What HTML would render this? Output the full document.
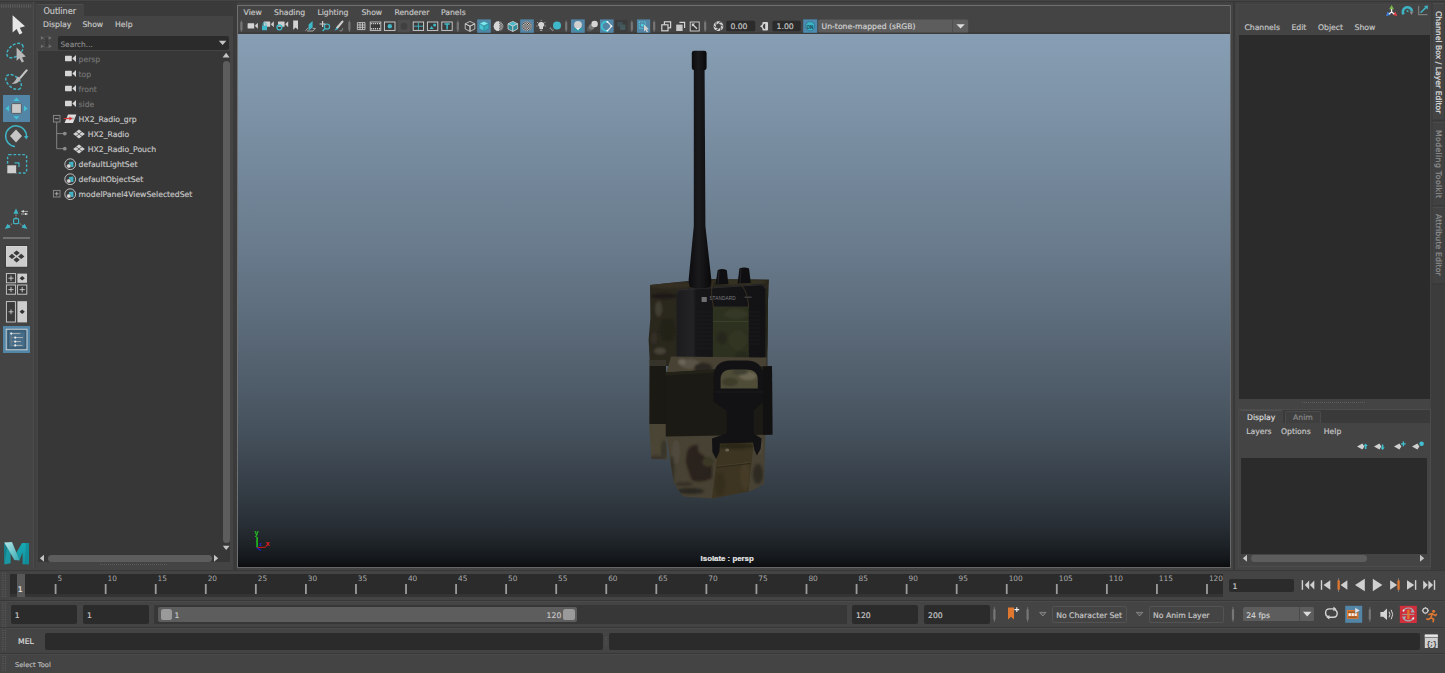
<!DOCTYPE html><html><head><meta charset="utf-8"><title>Maya</title><style>
html,body{margin:0;padding:0;}
body{width:1445px;height:673px;overflow:hidden;background:#444444;position:relative;
 font-family:"DejaVu Sans","Liberation Sans",sans-serif;font-size:7.7px;color:#c8c8c8;}
div{position:absolute;box-sizing:border-box;}
.t{white-space:nowrap;line-height:10px;height:10px;-webkit-text-stroke:0.18px currentColor;}
svg{position:absolute;overflow:visible;}
</style></head><body>
<div style="left:0px;top:0.9px;width:1445px;height:1.1px;background:#383838;"></div>
<div style="left:0px;top:2px;width:1445px;height:1.8px;background:#414141;"></div>
<svg style="left:1px;top:4px" width="30" height="4"><line x1="0" y1="2" x2="30" y2="2" stroke="#5e5e5e" stroke-width="3.4" stroke-dasharray="1 1.25"/></svg>
<div style="left:33px;top:2px;width:1px;height:566px;background:#4c4c4c;"></div>
<div style="left:34px;top:2px;width:2px;height:566px;background:#404040;"></div>
<svg style="left:0;top:0" width="34" height="200"><path d="M12.6 15.2 L12.6 32.6 L16.6 29 L19.4 34.4 L22.4 33 L19.8 27.8 L25 26.2 Z" fill="#e6e6e6"/><ellipse cx="15" cy="50.5" rx="9.3" ry="5.6" transform="rotate(-38 15 50.5)" fill="none" stroke="#3fb3c4" stroke-width="1.5" stroke-dasharray="3 1.6"/><path d="M16.6 47.6 L16.6 60.8 L19.6 58.2 L21.8 62.6 L24 61.6 L22 57.4 L25.8 56.4 Z" fill="#b8b8b8"/><ellipse cx="13.6" cy="82" rx="9.2" ry="5.6" transform="rotate(42 13.6 82)" fill="none" stroke="#3fb3c4" stroke-width="1.5" stroke-dasharray="3 1.6"/><path d="M26.6 70.4 L20.4 77.6" stroke="#c4c4c4" stroke-width="2.2" stroke-linecap="round"/><path d="M20.8 78.2 C19.5 82.5 15.5 84.5 11.6 83.6 C14.5 82.5 16 80 17.6 76.6 Z" fill="#b8b8b8"/><rect x="3" y="95" width="27" height="27" fill="#5285a6"/><rect x="11.6" y="103.6" width="9.8" height="9.8" rx="1" fill="#c9c9c9" stroke="#4a4a4a" stroke-width="0.8"/><path d="M16.5 97.6 L19.6 101 L13.4 101 Z M16.5 119.6 L19.6 116.2 L13.4 116.2 Z M5.4 108.5 L9 105.4 L9 111.6 Z M27.6 108.5 L24 105.4 L24 111.6 Z" fill="#43c3d3"/><path d="M26.4 137.4 A10.4 10.4 0 1 0 15 146.6" fill="none" stroke="#3fb3c4" stroke-width="1.5"/><path d="M24 136 L28.4 136 L26.2 139.6 Z" fill="#3fb3c4"/><path d="M16 129.6 L22 136 L16 142.4 L10 136 Z" fill="#c6c6c6"/><rect x="7.6" y="154.6" width="19" height="18.4" rx="1.5" fill="none" stroke="#3fb3c4" stroke-width="1.4" stroke-dasharray="2.6 1.8"/><path d="M14.6 162.8 L19 162.8 L19 167" fill="none" stroke="#3fb3c4" stroke-width="1.2"/><rect x="7" y="165" width="9.4" height="8.6" fill="#cfcfcf" stroke="#444" stroke-width="0.6"/></svg>
<svg style="left:0;top:200px" width="34" height="40"><path d="M16 12 L16 18 M14 22.4 L9 26 M18.4 22.4 L23 26" stroke="#9a9a9a" stroke-width="1" stroke-dasharray="1.4 1"/><path d="M16 8.6 L18.6 13.8 L13.4 13.8 Z M4.8 29 L7.6 23.8 L10.8 27.6 Z M27.4 29 L21.4 27.6 L24.6 23.8 Z" fill="#3fb3c4"/><rect x="13.6" y="18.6" width="5" height="5" rx="1" fill="none" stroke="#3fb3c4" stroke-width="1.2"/><path d="M21 11.4 H28 M21 14 H28" stroke="#bdbdbd" stroke-width="0.8"/><rect x="22.4" y="10.4" width="1.6" height="2" fill="#ddd"/><rect x="25" y="13" width="1.6" height="2" fill="#ddd"/></svg>
<div style="left:3px;top:237px;width:27px;height:2px;background:#707070;"></div>
<svg style="left:0;top:240px" width="34" height="120"><rect x="6.4" y="6.4" width="20.6" height="20" fill="#cdcdcd" stroke="#e4e4e4" stroke-width="0.8"/><rect x="5.6" y="5.6" width="22.2" height="21.6" fill="none" stroke="#3a3a3a" stroke-width="0.8"/><path d="M16.6 10.4 L19.8 13 L16.6 15.6 L13.4 13 Z M12 13.8 L15.2 16.4 L12 19 L8.8 16.4 Z M21.2 13.8 L24.4 16.4 L21.2 19 L18 16.4 Z M16.6 17.2 L19.8 19.8 L16.6 22.4 L13.4 19.8 Z" fill="#3a3a3a"/><rect x="6.4" y="33.6" width="9.2" height="9.2" fill="#3a3a3a" stroke="#cfcfcf" stroke-width="0.9"/><rect x="17.4" y="33.6" width="9.6" height="9.2" fill="#cdcdcd"/><rect x="6.4" y="45" width="9.2" height="9.2" fill="#3a3a3a" stroke="#cfcfcf" stroke-width="0.9"/><rect x="17.6" y="45" width="9.2" height="9.2" fill="#3a3a3a" stroke="#cfcfcf" stroke-width="0.9"/><path d="M8.4 38.2 H13.6 M11 35.6 V40.8 M8.4 49.6 H13.6 M11 47 V52.2 M19.6 49.6 H24.8 M22.2 47 V52.2" stroke="#cfcfcf" stroke-width="0.9"/><path d="M22.2 36 L24.8 38.2 L22.2 40.4 L19.6 38.2 Z" fill="#333"/><rect x="6.4" y="61.6" width="9" height="20.4" fill="#3a3a3a" stroke="#cfcfcf" stroke-width="0.9"/><rect x="17.4" y="61.2" width="9.6" height="21.2" fill="#cdcdcd"/><path d="M8.6 71.8 H13.4 M11 69.4 V74.2" stroke="#cfcfcf" stroke-width="0.9"/><path d="M22.2 69.6 L24.8 71.8 L22.2 74 L19.6 71.8 Z" fill="#333"/><rect x="3" y="86" width="27" height="27" fill="#5285a6"/><rect x="6.2" y="89.2" width="20.8" height="20.6" fill="#456c88" stroke="#d8d8d8" stroke-width="0.9"/><rect x="8.2" y="91" width="17" height="17" fill="none" stroke="#2e4a5e" stroke-width="0.7"/><path d="M11.4 93.6 H20.4 M15 97.6 H23 M15 101.6 H21 M15 105.4 H22.4" stroke="#b8b8b8" stroke-width="0.9"/><path d="M11.2 94 V105.4 H14 M11.2 97.6 H14 M11.2 101.6 H14" fill="none" stroke="#8a8a8a" stroke-width="0.6"/><circle cx="11.2" cy="93.6" r="1.1" fill="#eee"/><circle cx="15.2" cy="97.6" r="1.1" fill="#eee"/><circle cx="15.2" cy="101.6" r="1.1" fill="#eee"/><circle cx="15.2" cy="105.4" r="1.1" fill="#eee"/></svg>
<svg style="left:0;top:0" width="34" height="570"><defs><linearGradient id="mg1" x1="0" y1="0" x2="1" y2="1"><stop offset="0" stop-color="#b5e8ea"/><stop offset="1" stop-color="#35a9b2"/></linearGradient><linearGradient id="mg2" x1="0" y1="0" x2="0" y2="1"><stop offset="0" stop-color="#17aab3"/><stop offset="1" stop-color="#1592a0"/></linearGradient></defs><path d="M4.2 543 L10.6 553 L10.6 563.2 L4.4 564.4 Z" fill="#1a98a3"/><path d="M4.2 543 L7 547.4 L4.4 564.4 Z" fill="#13818c"/><path d="M22 543 L29 543.2 L29 564.2 L22.6 564.2 L22.6 552.4 L19.4 560.6 L16.2 553 Z" fill="url(#mg2)"/><path d="M26 543.2 L29 543.2 L29 564.2 L24.6 564.2 Z" fill="#0f8794" opacity="0.7"/><path d="M4.2 542.4 L12 542 L19.6 560.6 L14.4 560 Z" fill="url(#mg1)"/></svg>
<div style="left:36px;top:2px;width:197.4px;height:14px;background:#3a3a3a;"></div>
<div style="left:233.2px;top:2px;width:3.5px;height:568px;background:#3b3b3b;"></div>
<div style="left:36px;top:4px;width:48px;height:13px;background:#444444;border-top:1px solid #4e4e4e;border-radius:2px 2px 0 0;"></div>
<div class="t" style="left:43.4px;top:6.1px;color:#c6c6c6;font-size:8.1px;">Outliner</div>
<div class="t" style="left:43px;top:20.4px;color:#c6c6c6;font-size:7.7px;">Display</div>
<div class="t" style="left:82.4px;top:20.4px;color:#c6c6c6;font-size:7.7px;">Show</div>
<div class="t" style="left:115px;top:20.4px;color:#c6c6c6;font-size:7.7px;">Help</div>
<svg style="left:40px;top:35px" width="14" height="15"><rect x="4.6" y="2.2" width="4.4" height="10" fill="#3c3c3c" stroke="#5a5a5a" stroke-width="0.8" stroke-dasharray="1.6 1"/><path d="M0.9 1 L4.2 2.9 L0.9 4.8 Z M0.9 9.4 L4.2 11.3 L0.9 13.2 Z M8.6 1 L11.9 2.9 L8.6 4.8 Z M8.6 9.4 L11.9 11.3 L8.6 13.2 Z" fill="#6e6e6e"/></svg>
<div style="left:58px;top:36px;width:171px;height:14px;background:#2b2b2b;border-radius:2px;"></div>
<div class="t" style="left:60.4px;top:40.1px;color:#888888;font-size:7.4px;">Search...</div>
<svg style="left:218px;top:40px" width="10" height="6"><path d="M0.8 0.8 L8.4 0.8 L4.6 5 Z" fill="#c4c4c4"/></svg>
<div style="left:37.8px;top:51.2px;width:192.3px;height:511.2px;background:#373737;"></div>
<svg style="left:222px;top:52px" width="9" height="7"><path d="M0.6 5.4 L7.6 5.4 L4.1 0.8 Z" fill="#c4c4c4"/></svg>
<div style="left:223px;top:61px;width:7px;height:482px;background:#5d5d5d;border-radius:3.5px;"></div>
<svg style="left:222px;top:545px" width="9" height="7"><path d="M0.8 0.8 L7.6 0.8 L4.2 5 Z" fill="#c4c4c4"/></svg>
<svg style="left:39px;top:554px" width="6" height="9"><path d="M5 0.8 L5 7.8 L0.8 4.3 Z" fill="#c4c4c4"/></svg>
<div style="left:47.5px;top:555px;width:164px;height:7px;background:#5d5d5d;border-radius:3.5px;"></div>
<svg style="left:213px;top:554px" width="6" height="9"><path d="M1 0.8 L1 7.8 L5.2 4.3 Z" fill="#c4c4c4"/></svg>
<svg style="left:100px;top:563px" width="67" height="3"><line x1="0" y1="1.5" x2="67" y2="1.5" stroke="#5c5c5c" stroke-width="1" stroke-dasharray="1 1"/></svg>
<svg style="left:64.6px;top:54.7px" width="12" height="8"><rect x="0" y="0.8" width="6.8" height="5.4" rx="0.6" fill="#d6d6d6"/><path d="M7.3 3.5 L11 0 L11 7 Z" fill="#d6d6d6"/></svg>
<div class="t" style="left:78.6px;top:55.1px;color:#757575;font-size:7.7px;">persp</div>
<svg style="left:64.6px;top:69.69999999999999px" width="12" height="8"><rect x="0" y="0.8" width="6.8" height="5.4" rx="0.6" fill="#d6d6d6"/><path d="M7.3 3.5 L11 0 L11 7 Z" fill="#d6d6d6"/></svg>
<div class="t" style="left:78.6px;top:70.1px;color:#757575;font-size:7.7px;">top</div>
<svg style="left:64.6px;top:84.69999999999999px" width="12" height="8"><rect x="0" y="0.8" width="6.8" height="5.4" rx="0.6" fill="#d6d6d6"/><path d="M7.3 3.5 L11 0 L11 7 Z" fill="#d6d6d6"/></svg>
<div class="t" style="left:78.6px;top:85.1px;color:#757575;font-size:7.7px;">front</div>
<svg style="left:64.6px;top:99.69999999999999px" width="12" height="8"><rect x="0" y="0.8" width="6.8" height="5.4" rx="0.6" fill="#d6d6d6"/><path d="M7.3 3.5 L11 0 L11 7 Z" fill="#d6d6d6"/></svg>
<div class="t" style="left:78.6px;top:100.1px;color:#757575;font-size:7.7px;">side</div>
<svg style="left:52px;top:112px" width="30" height="42"><rect x="1.4" y="3.4" width="6.6" height="6.6" fill="none" stroke="#8c8c8c" stroke-width="0.9"/><path d="M2.8 6.7 H6.6" stroke="#b0b0b0" stroke-width="0.9"/><path d="M4.7 10 V36.7 H11 M4.7 21.6 H11" fill="none" stroke="#8c8c8c" stroke-width="0.9"/><circle cx="12.8" cy="21.6" r="1.9" fill="#8c8c8c"/><circle cx="12.8" cy="36.7" r="1.9" fill="#8c8c8c"/><path d="M16 2.4 L24.4 2.4 L21 11 L12.6 11 Z" fill="#dedede"/><path d="M13.4 7.6 L21.6 7.6 L22.6 5.6 L14.4 5.6 Z" fill="#555" opacity="0.35"/><path d="M11.6 6.5 H18" stroke="#e03030" stroke-width="1"/><path d="M17.4 4.6 L20.4 6.5 L17.4 8.4 Z" fill="#e03030"/></svg>
<div class="t" style="left:78.6px;top:115.1px;color:#c6c6c6;font-size:7.7px;">HX2_Radio_grp</div>
<svg style="left:73px;top:128.8px" width="13" height="10"><path d="M6 0.4 L8.8 2.4 L6 4.4 L3.2 2.4 Z M2.9 2.9 L5.7 4.9 L2.9 6.9 L0.1 4.9 Z M9.1 2.9 L11.9 4.9 L9.1 6.9 L6.3 4.9 Z M6 5.4 L8.8 7.4 L6 9.4 L3.2 7.4 Z" fill="#d2d2d2"/></svg>
<div class="t" style="left:87.8px;top:130.1px;color:#c6c6c6;font-size:7.7px;">HX2_Radio</div>
<svg style="left:73px;top:143.8px" width="13" height="10"><path d="M6 0.4 L8.8 2.4 L6 4.4 L3.2 2.4 Z M2.9 2.9 L5.7 4.9 L2.9 6.9 L0.1 4.9 Z M9.1 2.9 L11.9 4.9 L9.1 6.9 L6.3 4.9 Z M6 5.4 L8.8 7.4 L6 9.4 L3.2 7.4 Z" fill="#d2d2d2"/></svg>
<div class="t" style="left:87.8px;top:145.1px;color:#c6c6c6;font-size:7.7px;">HX2_Radio_Pouch</div>
<svg style="left:63.6px;top:158.2px" width="13" height="13"><circle cx="6.2" cy="6.2" r="5.4" fill="#3a3a3a" stroke="#cfcfcf" stroke-width="0.9"/><path d="M5 4 L9.4 3.4 L9.4 9 L5 9 Z" fill="#3fb3c4"/><circle cx="4.8" cy="8" r="2.1" fill="#dcdcdc" stroke="#555" stroke-width="0.5"/></svg>
<div class="t" style="left:78.6px;top:160.1px;color:#c6c6c6;font-size:7.7px;">defaultLightSet</div>
<svg style="left:63.6px;top:173.2px" width="13" height="13"><circle cx="6.2" cy="6.2" r="5.4" fill="#3a3a3a" stroke="#cfcfcf" stroke-width="0.9"/><path d="M5 4 L9.4 3.4 L9.4 9 L5 9 Z" fill="#3fb3c4"/><circle cx="4.8" cy="8" r="2.1" fill="#dcdcdc" stroke="#555" stroke-width="0.5"/></svg>
<div class="t" style="left:78.6px;top:175.1px;color:#c6c6c6;font-size:7.7px;">defaultObjectSet</div>
<svg style="left:63.6px;top:188.2px" width="13" height="13"><circle cx="6.2" cy="6.2" r="5.4" fill="#3a3a3a" stroke="#cfcfcf" stroke-width="0.9"/><path d="M5 4 L9.4 3.4 L9.4 9 L5 9 Z" fill="#3fb3c4"/><circle cx="4.8" cy="8" r="2.1" fill="#dcdcdc" stroke="#555" stroke-width="0.5"/></svg>
<div class="t" style="left:78.6px;top:190.1px;color:#c6c6c6;font-size:7.7px;">modelPanel4ViewSelectedSet</div>
<svg style="left:52px;top:189px" width="10" height="10"><rect x="1.4" y="1.4" width="6.6" height="6.6" fill="none" stroke="#8c8c8c" stroke-width="0.9"/><path d="M2.8 4.7 H6.6 M4.7 2.8 V6.6" stroke="#b0b0b0" stroke-width="0.9"/></svg>
<div style="left:236.8px;top:4.6px;width:994.5px;height:1px;background:#707070;"></div>
<div style="left:236.8px;top:4.6px;width:1px;height:563px;background:#707070;"></div>
<div style="left:1230.3px;top:4.6px;width:1px;height:563px;background:#666666;"></div>
<div style="left:236.8px;top:566.6px;width:994.5px;height:1px;background:#666666;"></div>
<div style="left:1233.4px;top:2px;width:1.8px;height:568px;background:#393939;"></div>
<div class="t" style="left:243.6px;top:8.2px;color:#c6c6c6;font-size:7.7px;">View</div>
<div class="t" style="left:274px;top:8.2px;color:#c6c6c6;font-size:7.7px;">Shading</div>
<div class="t" style="left:317.4px;top:8.2px;color:#c6c6c6;font-size:7.7px;">Lighting</div>
<div class="t" style="left:361.4px;top:8.2px;color:#c6c6c6;font-size:7.7px;">Show</div>
<div class="t" style="left:394.4px;top:8.2px;color:#c6c6c6;font-size:7.7px;">Renderer</div>
<div class="t" style="left:441px;top:8.2px;color:#c6c6c6;font-size:7.7px;">Panels</div>
<div style="left:238px;top:32px;width:992px;height:2px;background:#3c3c3c;"></div>
<div style="left:237.8px;top:34px;width:992.5px;height:532.6px;background:linear-gradient(to bottom,rgb(135,158,180) 0.0%,rgb(132,154,175) 5.0%,rgb(128,150,171) 10.0%,rgb(125,146,166) 15.0%,rgb(121,141,161) 20.0%,rgb(117,137,156) 25.0%,rgb(113,132,151) 30.0%,rgb(109,128,145) 35.0%,rgb(105,123,140) 40.0%,rgb(100,117,134) 45.0%,rgb(96,112,128) 50.0%,rgb(91,106,121) 55.0%,rgb(86,100,114) 60.0%,rgb(80,94,107) 65.0%,rgb(75,87,99) 70.0%,rgb(68,80,91) 75.0%,rgb(61,71,81) 80.0%,rgb(53,62,71) 85.0%,rgb(44,51,58) 90.0%,rgb(38,45,51) 92.5%,rgb(32,37,42) 95.0%,rgb(27,32,36) 96.5%,rgb(22,25,29) 98.0%,rgb(17,20,23) 99.0%,rgb(11,12,14) 100.0%);"></div>
<svg style="left:0;top:0" width="1240" height="36"><path d="M241.4 20.4 V32" stroke="#6c6c6c" stroke-width="1"/><path d="M241.4 22.8 V29.6" stroke="#767676" stroke-width="2.2" stroke-linecap="round"/><rect x="247.6" y="23.2" width="6.6" height="5.2" rx="0.5" fill="#d4d4d4"/><path d="M254.79999999999998 25.8 L257.8 22.8 L257.8 28.799999999999997 Z" fill="#d4d4d4"/><rect x="263.6" y="21.6" width="6.6" height="5.2" rx="0.5" fill="#cfcfcf"/><path d="M270.8 24.200000000000003 L273.8 21.200000000000003 L273.8 27.200000000000003 Z" fill="#cfcfcf"/><rect x="262" y="25.6" width="5" height="4.6" fill="#3fb9c9"/><path d="M263 25.6 V24.2 A1.5 1.5 0 0 1 266 24.2 V25.6" fill="none" stroke="#3fb9c9" stroke-width="0.9"/><rect x="278" y="21.6" width="6.6" height="5.2" rx="0.5" fill="#cfcfcf"/><path d="M285.2 24.200000000000003 L288.2 21.200000000000003 L288.2 27.200000000000003 Z" fill="#cfcfcf"/><circle cx="279.4" cy="27.4" r="2.4" fill="none" stroke="#3fb9c9" stroke-width="1.3"/><path d="M293.2 20.6 H298 V29.8 L295.6 27.6 L293.2 29.8 Z" fill="#d4d4d4"/><path d="M308.6 24.4 L312.6 21 L312.6 27.6 L308.6 30.6 Z" fill="#3fb9c9"/><path d="M305.4 30.6 L308.4 27.8 M307 31 H313 L315.4 28.4 H312.6" fill="none" stroke="#b0b0b0" stroke-width="0.9"/><circle cx="327" cy="26.6" r="2.6" fill="none" stroke="#3fb9c9" stroke-width="1.2"/><path d="M325 28.6 L322.6 31" stroke="#3fb9c9" stroke-width="1.4"/><path d="M319.6 24 H325.4 M322.6 21 V27" stroke="#cfcfcf" stroke-width="1.2"/><path d="M342.4 21.6 L337 28" stroke="#cfcfcf" stroke-width="2.2" stroke-linecap="round"/><path d="M336.6 27.4 L334.4 30.8 L338 29" fill="#3fb9c9"/><path d="M339.6 30.6 C341.6 31.4 343.4 30 342.2 28.2" fill="none" stroke="#a8a8a8" stroke-width="0.8"/><path d="M349.4 20.4 V32" stroke="#6c6c6c" stroke-width="1"/><path d="M349.4 22.8 V29.6" stroke="#767676" stroke-width="2.2" stroke-linecap="round"/><path d="M357.4 22.6 H365 V29.6 H357.4 Z M357.4 25 H365 M357.4 27.3 H365 M360 22.6 V29.6 M362.5 22.6 V29.6" fill="none" stroke="#d4d4d4" stroke-width="0.8"/><rect x="370.2" y="22" width="10.6" height="8.4" fill="#3a3a3a" stroke="#d4d4d4" stroke-width="0.8"/><path d="M370.6 23.6 H380.4 M370.6 28.8 H380.4" stroke="#d4d4d4" stroke-width="1.4" stroke-dasharray="1.2 0.9"/><rect x="384.4" y="22" width="10.6" height="8.4" fill="#3a3a3a" stroke="#d4d4d4" stroke-width="0.9"/><circle cx="389.8" cy="26.2" r="2.2" fill="#3fb9c9"/><rect x="397.8" y="19.8" width="12.6" height="12.6" fill="#4d4d4d"/><circle cx="404" cy="26.2" r="3.5" fill="#404040"/><rect x="413.2" y="22" width="10.4" height="8.4" fill="#3a3a3a" stroke="#d4d4d4" stroke-width="0.9"/><path d="M414 26.2 H423 M418.4 22.6 V30" stroke="#3fb9c9" stroke-width="0.9"/><rect x="427.4" y="22" width="10.4" height="8.4" fill="#3a3a3a" stroke="#d4d4d4" stroke-width="0.9"/><circle cx="434.6" cy="25" r="1.5" fill="#3fb9c9"/><path d="M429.6 29 L431.6 26 L433.6 29 Z" fill="#3fb9c9"/><rect x="441.8" y="22" width="10.4" height="8.4" fill="#3a3a3a" stroke="#d4d4d4" stroke-width="0.9"/><path d="M444.4 24 H449.8 M447.1 24 V29.4" stroke="#3fb9c9" stroke-width="1.5"/><path d="M457.8 20.4 V32" stroke="#6c6c6c" stroke-width="1"/><path d="M457.8 22.8 V29.6" stroke="#767676" stroke-width="2.2" stroke-linecap="round"/><path d="M470 21.4 L474.8 23.799999999999997 L470 26.2 L465.2 23.799999999999997 Z" fill="none" stroke="#d4d4d4" stroke-width="0.8" stroke-linejoin="round"/><path d="M465.2 23.799999999999997 L470 26.2 L470 31.4 L465.2 29.0 Z" fill="none" stroke="#d4d4d4" stroke-width="0.8" stroke-linejoin="round"/><path d="M474.8 23.799999999999997 L470 26.2 L470 31.4 L474.8 29.0 Z" fill="none" stroke="#d4d4d4" stroke-width="0.8" stroke-linejoin="round"/><rect x="477.2" y="19.4" width="13.6" height="13.4" fill="#5285a6"/><path d="M484 21.2 L488.8 23.599999999999998 L484 26.0 L479.2 23.599999999999998 Z" fill="#7fe6ee" stroke="#2d7f8c" stroke-width="0.5" stroke-linejoin="round"/><path d="M479.2 23.599999999999998 L484 26.0 L484 31.2 L479.2 28.8 Z" fill="#4cc4d2" stroke="#2d7f8c" stroke-width="0.5" stroke-linejoin="round"/><path d="M488.8 23.599999999999998 L484 26.0 L484 31.2 L488.8 28.8 Z" fill="#36aebd" stroke="#2d7f8c" stroke-width="0.5" stroke-linejoin="round"/><defs><pattern id="chk" width="2.4" height="2.4" patternUnits="userSpaceOnUse"><rect width="2.4" height="2.4" fill="#2a2a2a"/><rect x="0" y="0" width="1.2" height="1.2" fill="#e4e4e4"/><rect x="1.2" y="1.2" width="1.2" height="1.2" fill="#e4e4e4"/></pattern></defs><circle cx="498.6" cy="26.2" r="4.9" fill="url(#chk)"/><path d="M498.6 21.3 A4.9 4.9 0 0 0 498.6 31.1 A0.8 4.9 0 0 0 498.6 21.3 Z" fill="#d6d6d6"/><path d="M512.8 21.4 L517.5999999999999 23.799999999999997 L512.8 26.2 L507.99999999999994 23.799999999999997 Z" fill="#49bccb" stroke="#d4d4d4" stroke-width="0.8" stroke-linejoin="round"/><path d="M507.99999999999994 23.799999999999997 L512.8 26.2 L512.8 31.4 L507.99999999999994 29.0 Z" fill="#2e8e9b" stroke="#d4d4d4" stroke-width="0.8" stroke-linejoin="round"/><path d="M517.5999999999999 23.799999999999997 L512.8 26.2 L512.8 31.4 L517.5999999999999 29.0 Z" fill="#2e8e9b" stroke="#d4d4d4" stroke-width="0.8" stroke-linejoin="round"/><rect x="520.2" y="19.4" width="13.6" height="13.4" fill="#5285a6"/><circle cx="527" cy="26.2" r="5.1" fill="url(#chk)"/><path d="M541.2 22 A2.7 2.7 0 0 1 543 27 V29 H539.4 V27 A2.7 2.7 0 0 1 541.2 22 Z" fill="#d4d4d4"/><rect x="540.2" y="29.6" width="2" height="1.4" fill="#aaa"/><path d="M541.2 19.8 V21 M537 22 L538 23 M545.4 22 L544.4 23 M536.4 26 H537.6 M546 26 H544.8" stroke="#bdbdbd" stroke-width="0.8"/><circle cx="557" cy="25.6" r="4" fill="#3fb9c9"/><path d="M550 28 L553.4 30.6" stroke="#9a9a9a" stroke-width="2" stroke-dasharray="0.9 0.7"/><path d="M566.2 20.4 V32" stroke="#6c6c6c" stroke-width="1"/><path d="M566.2 22.8 V29.6" stroke="#767676" stroke-width="2.2" stroke-linecap="round"/><rect x="571" y="19.4" width="13.8" height="13.4" fill="#5285a6"/><path d="M572.6 29.2 L578 26.8 L583.4 29.2 L578 31.8 Z" fill="#2f9aa8"/><circle cx="578" cy="24.8" r="3.9" fill="#d0d0d0"/><path d="M576 28 L578 30.4 L580 28 Z" fill="#eee"/><circle cx="589.4" cy="29" r="2.6" fill="#5a5a5a"/><circle cx="591.6" cy="26.8" r="2.9" fill="#7a7a7a"/><circle cx="594.6" cy="24" r="3.2" fill="#d6d6d6"/><rect x="600" y="19.4" width="13.6" height="13.4" fill="#5285a6"/><path d="M607.6 21.8 A4.6 4.6 0 1 0 607.6 30.6" fill="none" stroke="#3fc4d4" stroke-width="1.8"/><path d="M607.4 21.6 L611.6 26.2 L607.4 30.8" fill="none" stroke="#e6e6e6" stroke-width="1.2"/><circle cx="607.4" cy="21.8" r="0.9" fill="#fff"/><circle cx="611.4" cy="26.2" r="0.9" fill="#fff"/><circle cx="607.4" cy="30.6" r="0.9" fill="#fff"/><rect x="615" y="19.8" width="12.6" height="12.6" fill="#3c3c3c"/><rect x="617.4" y="22" width="5" height="4.6" fill="#3f5255"/><rect x="620" y="24.6" width="5.4" height="5.4" fill="#44595d"/><path d="M631.8 20.4 V32" stroke="#6c6c6c" stroke-width="1"/><path d="M631.8 22.8 V29.6" stroke="#767676" stroke-width="2.2" stroke-linecap="round"/><rect x="637" y="19.4" width="13.2" height="13.4" fill="#5285a6"/><rect x="639.2" y="21.8" width="6.2" height="6.6" fill="none" stroke="#4fd0de" stroke-width="1.1" stroke-dasharray="1.2 1"/><rect x="641" y="23.8" width="2.6" height="2.6" fill="#4fd0de"/><path d="M644 24.6 V31.4 L645.6 30 L646.8 32.4 L648 31.8 L646.9 29.6 L649 29.2 Z" fill="#d0d0d0"/><path d="M654.2 20.4 V32" stroke="#6c6c6c" stroke-width="1"/><path d="M654.2 22.8 V29.6" stroke="#767676" stroke-width="2.2" stroke-linecap="round"/><rect x="664.4" y="21.8" width="6.2" height="6" fill="none" stroke="#d4d4d4" stroke-width="1.2"/><rect x="661.8" y="24.8" width="6.2" height="6" fill="#444" stroke="#d4d4d4" stroke-width="1.2"/><path d="M679.4 22.4 H684.6 V28" fill="none" stroke="#d4d4d4" stroke-width="1.2"/><rect x="676.2" y="24.6" width="6.4" height="6.4" fill="#c8c8c8"/><rect x="690.2" y="22" width="9" height="9" fill="#3a3a3a" stroke="#d4d4d4" stroke-width="0.9"/><path d="M692.4 24.2 L697 28.8" stroke="#d4d4d4" stroke-width="1.3"/><path d="M691.8 23.6 H695 L691.8 26.8 Z" fill="#d4d4d4"/><path d="M705.2 20.4 V32" stroke="#6c6c6c" stroke-width="1"/><path d="M705.2 22.8 V29.6" stroke="#767676" stroke-width="2.2" stroke-linecap="round"/><circle cx="718.4" cy="26.2" r="4.9" fill="#d4d4d4"/><path d="M718.4 23.4 L720.9 24.8 L720.9 27.6 L718.4 29 L715.9 27.6 L715.9 24.8 Z" fill="#444"/><path d="M718.4 23.4 L721.6 21.6 M720.9 24.8 L723.4 26.6 M720.9 27.6 L720.6 31 M718.4 29 L715.2 30.8 M715.9 27.6 L713.4 25.8 M715.9 24.8 L716.2 21.4" stroke="#444" stroke-width="0.9"/><rect x="726.2" y="20.8" width="29" height="10.4" rx="1.5" fill="#2b2b2b"/><rect x="762.4" y="22" width="5.6" height="8.6" rx="1" fill="#d4d4d4"/><path d="M760 26.2 L763.4 23.6 V28.8 Z" fill="#d4d4d4"/><path d="M765.2 23.4 A3 3 0 0 0 765.2 29.2 Z" fill="#3a3a3a"/><rect x="772.4" y="20.8" width="28.4" height="10.4" rx="1.5" fill="#2b2b2b"/><rect x="803.2" y="19.4" width="14" height="13.4" fill="#4d8ab2"/><circle cx="810.2" cy="26.2" r="4.6" fill="#3db5c6" stroke="#2a6e80" stroke-width="0.7"/><rect x="818.2" y="19.6" width="150" height="13" rx="1.5" fill="#5d5d5d"/><path d="M952.6 19.6 V32.6" stroke="#4a4a4a" stroke-width="0.8"/><path d="M956.4 24.2 H964.8 L960.6 28.6 Z" fill="#dcdcdc"/></svg>
<div class="t" style="left:730.4px;top:22px;color:#c6c6c6;font-size:7.7px;">0.00</div>
<div class="t" style="left:776.6px;top:22px;color:#c6c6c6;font-size:7.7px;">1.00</div>
<div class="t" style="left:806.4px;top:23.4px;color:#1d4f63;font-size:4.6px;font-weight:bold;font-family:'Liberation Sans',sans-serif;">ON</div>
<div class="t" style="left:821.6px;top:22.2px;color:#d2d2d2;font-size:7.7px;">Un-tone-mapped (sRGB)</div>
<svg style="left:0;top:0" width="1240" height="570"><defs><filter id="b1" x="-20%" y="-20%" width="140%" height="140%"><feGaussianBlur stdDeviation="1.1"/></filter><filter id="b2" x="-20%" y="-20%" width="140%" height="140%"><feGaussianBlur stdDeviation="0.5"/></filter><clipPath id="cBack"><path d="M650 285 L688 281 L712 279 L769 279.6 L768 300 L767.4 366 L650 366 L648.6 340 L650.4 318 Z"/></clipPath><clipPath id="cSide"><path d="M649.6 360 L666 360 L666 438 L667.6 459.6 L651.4 459 L649.4 430 Z"/></clipPath><clipPath id="cFront"><path d="M671 356.6 L766.6 357.4 L765.4 434 L764 484 L752 490.6 L747 491.6 L712 498.4 L683 496.4 L674 483.4 L666.4 438 L666.4 372 Z"/></clipPath><clipPath id="cVel"><rect x="712.8" y="306.6" width="36" height="56"/></clipPath><clipPath id="cStrapV"><path d="M718.4 440 L754 440 L748.4 491.6 L712 498.4 L716.4 462 Z"/></clipPath><linearGradient id="gAnt" x1="0" x2="1" y1="0" y2="0"><stop offset="0" stop-color="#0c0c0e"/><stop offset="0.45" stop-color="#1a1a1d"/><stop offset="1" stop-color="#09090a"/></linearGradient><linearGradient id="gBody" x1="0" x2="1" y1="0" y2="0"><stop offset="0" stop-color="#1c1c1e"/><stop offset="0.18" stop-color="#232326"/><stop offset="0.22" stop-color="#161618"/><stop offset="1" stop-color="#121214"/></linearGradient></defs><g clip-path="url(#cBack)"><rect x="640" y="270" width="140" height="100" fill="#2a271d"/><g filter="url(#b1)"><ellipse cx="670" cy="285" rx="22" ry="3.4" fill="#342f22"/><ellipse cx="664" cy="296" rx="13" ry="2.6" fill="#1f1916"/><ellipse cx="658.6" cy="309" rx="3.6" ry="8" fill="#413d32"/><ellipse cx="668" cy="330" rx="8" ry="11" fill="#212118"/><ellipse cx="660" cy="351" rx="6" ry="3.6" fill="#474238"/><ellipse cx="654" cy="338" rx="3" ry="6" fill="#342f26"/><ellipse cx="740" cy="282" rx="26" ry="3" fill="#353124"/><ellipse cx="767.4" cy="320" rx="2.4" ry="30" fill="#222019"/></g></g><g clip-path="url(#cSide)"><rect x="645" y="355" width="30" height="110" fill="#4a4534"/><rect x="645" y="355" width="30" height="11" fill="#36332a"/><rect x="645" y="366" width="22" height="58" fill="#1a1914"/><g filter="url(#b1)"><ellipse cx="664" cy="450" rx="3" ry="10" fill="#38342a"/><ellipse cx="656" cy="458" rx="8" ry="2.4" fill="#3a362b"/></g></g><path d="M676.6 358 L676.6 294 Q676.8 289.6 681 289.2 L760.8 284.2 Q765.2 284.2 765.4 288.6 L765.4 358 Z" fill="url(#gBody)"/><path d="M677.2 293 Q677.6 290 681 289.8 L760.8 284.8 Q764.6 284.8 764.8 288.6" fill="none" stroke="#2c2c30" stroke-width="1"/><path d="M694 300 V356" stroke="#232326" stroke-width="0.8"/><path d="M696 312 H712 M696 316 H712 M696 320 H712 M696 324 H712 M696 328 H712 M696 332 H712 M696 336 H712 M696 340 H712 M696 344 H712 M696 348 H712 M749 312 H760 M749 316 H760 M749 320 H760 M749 324 H760 M749 328 H760 M749 332 H760 M749 336 H760 M749 340 H760 M749 344 H760" stroke="#1b1b1e" stroke-width="1.2"/><rect x="701.6" y="297" width="5.2" height="5" fill="#6f6f72"/><text x="709.4" y="300.4" font-size="4.7" fill="#7e7e82" font-family="Liberation Sans, sans-serif" letter-spacing="0.1">STANDARD</text><rect x="744.6" y="296.6" width="7" height="1.2" fill="#4a4a4e"/><g clip-path="url(#cVel)"><rect x="712" y="306" width="38" height="58" fill="#2d3120"/><g filter="url(#b1)"><ellipse cx="736" cy="314" rx="12" ry="5" fill="#353926"/><ellipse cx="722" cy="338" rx="5" ry="6" fill="#27251d"/><ellipse cx="738" cy="340" rx="9" ry="10" fill="#323623"/><ellipse cx="742" cy="356" rx="7" ry="5" fill="#282b1a"/></g><path d="M713 321.6 H748.6" stroke="#40442d" stroke-width="0.9"/></g><path d="M713.6 279.6 C710 290 712 298 713.4 307" fill="none" stroke="#3a3020" stroke-width="1"/><path d="M736 280 C744 286 748 294 748.6 307" fill="none" stroke="#3a3020" stroke-width="1"/><g clip-path="url(#cFront)"><rect x="660" y="350" width="115" height="150" fill="#474233"/><g filter="url(#b1)"><ellipse cx="690" cy="364" rx="10" ry="5" fill="#585346"/><ellipse cx="682" cy="362" rx="4" ry="3" fill="#6a6456"/><ellipse cx="703" cy="368" rx="9" ry="5" fill="#2b2520"/><ellipse cx="742" cy="378" rx="16" ry="7" fill="#474735"/><ellipse cx="752" cy="372" rx="7" ry="4" fill="#5f5a50"/><ellipse cx="728" cy="386" rx="8" ry="4" fill="#343425"/><path d="M687 452 Q690 444 698 445 Q696 452 702 455 Q708 458 712 466 L712 478 Q700 484 692 480 Q688 470 686 462 Z" fill="#29201c"/><ellipse cx="708" cy="462" rx="6" ry="5" fill="#3b3727"/><ellipse cx="676" cy="452" rx="4" ry="12" fill="#504a3c"/><ellipse cx="690" cy="491" rx="14" ry="3" fill="#2c2820"/><ellipse cx="684" cy="484" rx="9" ry="2" fill="#343027"/><ellipse cx="759" cy="446" rx="4" ry="9" fill="#504a3c"/><ellipse cx="758" cy="474" rx="5" ry="10" fill="#2f2922"/><ellipse cx="672" cy="470" rx="2.4" ry="14" fill="#343027"/></g></g><path d="M665.6 372.4 L772 366 L772.4 434.6 L665.8 436.4 Z" fill="#1c1a14"/><path d="M665.6 372.4 L772 366 L772 369 L665.6 375.4 Z" fill="#232219"/><path d="M763 366.8 L772 366 L772.4 434.6 L763 434.8 L763 366.8 Z" fill="#111111"/><g clip-path="url(#cStrapV)"><rect x="708" y="438" width="50" height="64" fill="#3d3522"/><g filter="url(#b1)"><ellipse cx="736" cy="446" rx="18" ry="3" fill="#2a2519"/><ellipse cx="745" cy="476" rx="5" ry="14" fill="#443b26"/><ellipse cx="720" cy="484" rx="5" ry="12" fill="#342d1d"/></g><path d="M716.6 466.4 L751 462.4" stroke="#4a412c" stroke-width="0.9"/><path d="M716.4 467.4 L751 463.4" stroke="#2a2418" stroke-width="0.8"/><ellipse cx="727.2" cy="450" rx="2" ry="1.5" fill="#6a6456"/></g><g><rect x="719.6" y="368.4" width="39" height="21" fill="#4f4c38"/><g filter="url(#b1)"><ellipse cx="748" cy="376" rx="9" ry="4" fill="#6a6551"/><ellipse cx="730" cy="382" rx="8" ry="4" fill="#3d3c2b"/><ellipse cx="740" cy="372" rx="8" ry="3" fill="#414130"/></g></g><path fill-rule="evenodd" fill="#121214" d="M713.4 401.6 L713.6 378 C713.8 365 720 360.4 731 360.4 L746 360.4 C757 360.4 763.2 365 763.4 378 L763.6 401.6 L753.6 410.8 L753.6 433.6 L761.6 438.6 L760.6 449 L757 455.4 L754.4 450 L753 442.4 L719.8 443.6 L719.4 452 L716 459 L712.4 452 L712 438.4 L726.6 433.6 L726.6 410.8 Z M720.6 388.4 L757.8 388.4 L757.8 379 C757.6 372 753 369.4 746 369.4 L732 369.4 C725 369.4 720.8 372 720.6 379 Z"/><path d="M713.6 392 H763.4" stroke="#1e1e21" stroke-width="0.8"/><path d="M693.8 69 L693.8 226 L688.6 280 L689.6 287 Q700 290 710.4 287 L711.4 280 L705.4 226 L704.6 69 Z" fill="url(#gAnt)"/><rect x="691.8" y="50.8" width="14.8" height="19.4" rx="2.4" fill="url(#gAnt)"/><path d="M717.6 270.2 Q722.2 267.8 726.8 270.2 L728.4 284 L715.6 284.6 Z" fill="#0f0f11"/><path d="M719 270.6 L718 284" stroke="#2a2a2e" stroke-width="0.8"/><path d="M739.4 268.6 Q744.2 266.2 749 268.6 L750.8 283 L737.6 283.6 Z" fill="#0f0f11"/><path d="M741 269 L740 283" stroke="#2a2a2e" stroke-width="0.8"/></svg>
<svg style="left:250px;top:528px" width="24" height="26"><path d="M7.1 9 V19.6" stroke="#1fae1f" stroke-width="1.8"/><path d="M7 19.6 L15.6 19.2 L16.6 17.6" fill="none" stroke="#d41616" stroke-width="1"/><path d="M7 19.6 L10.8 22.6" stroke="#2020e0" stroke-width="1.2"/><text x="4.6" y="6.6" font-size="7.4" font-weight="bold" fill="#22c822" font-family="Liberation Sans, sans-serif">y</text><text x="15.6" y="17.8" font-size="7.4" font-weight="bold" fill="#e61a1a" font-family="Liberation Sans, sans-serif">x</text><text x="9.4" y="18.4" font-size="4.6" font-weight="bold" fill="#2a2af0" font-family="Liberation Sans, sans-serif">z</text></svg>
<div class="t" style="left:700.6px;top:553.7px;color:#e8e8e8;font-size:7.85px;font-weight:bold;font-family:'Liberation Sans','DejaVu Sans',sans-serif;">Isolate : persp</div>
<div style="left:1237px;top:4px;width:193px;height:1px;background:#474747;"></div>
<div style="left:1237px;top:4px;width:1px;height:400px;background:#474747;"></div>
<svg style="left:1380px;top:0" width="52" height="20"><path d="M11.6 5 L14 9.2 L9.2 9.2 Z" fill="#7ab648"/><path d="M6 16.2 L7.6 11.4 L10.6 14.8 Z" fill="#3f7fe0"/><path d="M17.2 16.2 L12.6 14.8 L15.6 11.4 Z" fill="#e0404a"/><path d="M11.6 9 V12 L9 14 M11.6 12 L14.2 14" fill="none" stroke="#eeeeee" stroke-width="1.3"/><path d="M23.6 14.4 A4.6 4.6 0 1 1 32 11.4" fill="none" stroke="#3fb3c4" stroke-width="2.6"/><path d="M29.6 11.4 L33.4 11.4 L31.4 15 Z" fill="#8a8a8a"/><path d="M26 11 L28.4 9.6 L28.4 12.4 Z" fill="#3fb3c4"/><path d="M38.6 6 V14.6 H47.6" fill="none" stroke="#7a7a7a" stroke-width="1.3"/><path d="M40.6 12.8 L46 7.4" stroke="#3fb3c4" stroke-width="1.5"/><path d="M44 6 L48 5.6 L47.6 9.6 Z" fill="#3fb3c4"/></svg>
<div class="t" style="left:1244.4px;top:23.3px;color:#c6c6c6;font-size:7.7px;">Channels</div>
<div class="t" style="left:1291.4px;top:23.3px;color:#c6c6c6;font-size:7.7px;">Edit</div>
<div class="t" style="left:1318px;top:23.3px;color:#c6c6c6;font-size:7.7px;">Object</div>
<div class="t" style="left:1354.6px;top:23.3px;color:#c6c6c6;font-size:7.7px;">Show</div>
<div style="left:1239px;top:35.3px;width:191px;height:364.2px;background:#2b2b2b;"></div>
<svg style="left:1302px;top:401px" width="64" height="3"><line x1="0" y1="1.5" x2="64" y2="1.5" stroke="#5e5e5e" stroke-width="1" stroke-dasharray="1 1"/></svg>
<div style="left:1238px;top:409px;width:193px;height:14px;background:#3a3a3a;"></div>
<div style="left:1238px;top:409px;width:193px;height:158px;border:1px solid #4c4c4c;"></div>
<div style="left:1239px;top:410px;width:44.4px;height:13px;background:#444444;border-top:1px solid #505050;border-radius:2px 2px 0 0;"></div>
<div style="left:1285.2px;top:410.6px;width:35.4px;height:12px;background:#3f3f3f;border:1px solid #4a4a4a;border-bottom:none;border-radius:2px 2px 0 0;"></div>
<div style="left:1239px;top:423px;width:191px;height:143px;background:#444444;"></div>
<div class="t" style="left:1247px;top:412.6px;color:#dcdcdc;font-size:7.7px;">Display</div>
<div class="t" style="left:1293px;top:412.6px;color:#8a8a8a;font-size:7.7px;">Anim</div>
<div class="t" style="left:1246.2px;top:426.9px;color:#c6c6c6;font-size:7.7px;">Layers</div>
<div class="t" style="left:1281px;top:426.9px;color:#c6c6c6;font-size:7.7px;">Options</div>
<div class="t" style="left:1323.8px;top:426.9px;color:#c6c6c6;font-size:7.7px;">Help</div>
<svg style="left:1355.6px;top:440px" width="14" height="12"><path d="M1 6.6 L6.4 3.4 L8.4 6.4 L6.4 9.6 Z" fill="#d0d0d0"/><path d="M9.6 4.4 L11.8 7 H10.4 V10 H8.8 V7 H7.4 Z" fill="#3fc0d0" transform="translate(0,-1)"/></svg>
<svg style="left:1373.4px;top:440px" width="14" height="12"><path d="M1 6.6 L6.4 3.4 L8.4 6.4 L6.4 9.6 Z" fill="#d0d0d0"/><path d="M9.6 10 L11.8 7.4 H10.4 V4.4 H8.8 V7.4 H7.4 Z" fill="#3fc0d0"/></svg>
<svg style="left:1393.4px;top:440px" width="14" height="12"><path d="M1 6.6 L6.4 3.4 L8.4 6.4 L6.4 9.6 Z" fill="#d0d0d0"/><path d="M10.4 1.6 V6.2 M8.1 3.9 H12.7" stroke="#3fc0d0" stroke-width="1.4"/></svg>
<svg style="left:1411.4px;top:440px" width="14" height="12"><path d="M1 6.6 L6.4 3.4 L8.4 6.4 L6.4 9.6 Z" fill="#d0d0d0"/><circle cx="10.6" cy="3.8" r="2.3" fill="#3fc0d0"/></svg>
<div style="left:1241px;top:458px;width:186px;height:96px;background:#2b2b2b;"></div>
<svg style="left:1242px;top:554px" width="6" height="9"><path d="M5 0.8 L5 7.8 L0.8 4.3 Z" fill="#c4c4c4"/></svg>
<div style="left:1251px;top:555.4px;width:115.6px;height:6.8px;background:#5d5d5d;border-radius:3.4px;"></div>
<svg style="left:1419px;top:554px" width="6" height="9"><path d="M1 0.8 L1 7.8 L5.2 4.3 Z" fill="#c4c4c4"/></svg>
<div style="left:1431px;top:2px;width:14px;height:568px;background:#3e3e3e;"></div>
<div style="left:1431px;top:284px;width:14px;height:286px;background:#3c3c3c;"></div>
<div style="left:1432.5px;top:3px;width:11px;height:115.8px;background:#444444;border-top:1px solid #4e4e4e;"></div>
<div style="left:1433px;top:122.2px;width:11px;height:83px;background:#414141;border-top:1px solid #4a4a4a;"></div>
<div style="left:1433px;top:207px;width:11px;height:76.4px;background:#414141;border-top:1px solid #4a4a4a;"></div>
<div style="left:1432px;top:119.6px;width:13px;height:1.6px;background:#393939;"></div>
<div style="left:1432px;top:205px;width:13px;height:1.4px;background:#393939;"></div>
<div style="left:1432px;top:283.4px;width:13px;height:1.2px;background:#393939;"></div>
<div class="t" style="left:1443px;top:11px;color:#dcdcdc;transform-origin:0 0;transform:rotate(90deg);-webkit-text-stroke:0.25px #dcdcdc;letter-spacing:0px;">Channel Box / Layer Editor</div>
<div class="t" style="left:1443px;top:129.6px;color:#8c8c8c;transform-origin:0 0;transform:rotate(90deg);-webkit-text-stroke:0.25px #8c8c8c;letter-spacing:0.4px;">Modeling Toolkit</div>
<div class="t" style="left:1443px;top:214.4px;color:#8c8c8c;transform-origin:0 0;transform:rotate(90deg);-webkit-text-stroke:0.25px #8c8c8c;letter-spacing:0.17px;">Attribute Editor</div>
<div style="left:0px;top:570px;width:1445px;height:1.4px;background:#383838;"></div>
<div style="left:0px;top:600px;width:1445px;height:1.2px;background:#383838;"></div>
<div style="left:0px;top:601.2px;width:1445px;height:0.8px;background:#4a4a4a;"></div>
<div style="left:0px;top:627.2px;width:1445px;height:1.2px;background:#383838;"></div>
<div style="left:0px;top:628.4px;width:1445px;height:0.8px;background:#4a4a4a;"></div>
<div style="left:0px;top:653px;width:1445px;height:1.2px;background:#383838;"></div>
<div style="left:0px;top:654.2px;width:1445px;height:0.8px;background:#4a4a4a;"></div>
<svg style="left:1.6px;top:573px" width="5" height="24"><line x1="0.9" y1="0" x2="0.9" y2="24" stroke="#5c5c5c" stroke-width="1.2" stroke-dasharray="1 1.3"/><line x1="3.5" y1="0" x2="3.5" y2="24" stroke="#5c5c5c" stroke-width="1.2" stroke-dasharray="1 1.3"/></svg>
<svg style="left:1.6px;top:603px" width="5" height="24"><line x1="0.9" y1="0" x2="0.9" y2="24" stroke="#5c5c5c" stroke-width="1.2" stroke-dasharray="1 1.3"/><line x1="3.5" y1="0" x2="3.5" y2="24" stroke="#5c5c5c" stroke-width="1.2" stroke-dasharray="1 1.3"/></svg>
<svg style="left:1.6px;top:630px" width="5" height="21"><line x1="0.9" y1="0" x2="0.9" y2="21" stroke="#5c5c5c" stroke-width="1.2" stroke-dasharray="1 1.3"/><line x1="3.5" y1="0" x2="3.5" y2="21" stroke="#5c5c5c" stroke-width="1.2" stroke-dasharray="1 1.3"/></svg>
<svg style="left:1.6px;top:656px" width="5" height="16"><line x1="0.9" y1="0" x2="0.9" y2="16" stroke="#5c5c5c" stroke-width="1.2" stroke-dasharray="1 1.3"/><line x1="3.5" y1="0" x2="3.5" y2="16" stroke="#5c5c5c" stroke-width="1.2" stroke-dasharray="1 1.3"/></svg>
<div style="left:10px;top:574.1px;width:1213px;height:22.6px;background:#2b2b2b;"></div>
<div style="left:10px;top:594.4px;width:1213px;height:2.3px;background:#343434;"></div>
<div style="left:16.6px;top:574.1px;width:8.4px;height:22.6px;background:#585858;"></div>
<div class="t" style="left:17.8px;top:584.6px;color:#e6e6e6;font-size:7.7px;">1</div>
<svg style="left:0;top:0;font-family:'DejaVu Sans','Liberation Sans',sans-serif" width="1240" height="600"><rect x="54.70" y="584" width="1.8" height="10" fill="#9c9c9c"/><text x="57.50" y="581.3" font-size="7.4" fill="#a8a8a8">5</text><rect x="104.76" y="584" width="1.8" height="10" fill="#9c9c9c"/><text x="107.56" y="581.3" font-size="7.4" fill="#a8a8a8">10</text><rect x="154.82" y="584" width="1.8" height="10" fill="#9c9c9c"/><text x="157.62" y="581.3" font-size="7.4" fill="#a8a8a8">15</text><rect x="204.88" y="584" width="1.8" height="10" fill="#9c9c9c"/><text x="207.68" y="581.3" font-size="7.4" fill="#a8a8a8">20</text><rect x="254.94" y="584" width="1.8" height="10" fill="#9c9c9c"/><text x="257.74" y="581.3" font-size="7.4" fill="#a8a8a8">25</text><rect x="305.00" y="584" width="1.8" height="10" fill="#9c9c9c"/><text x="307.80" y="581.3" font-size="7.4" fill="#a8a8a8">30</text><rect x="355.06" y="584" width="1.8" height="10" fill="#9c9c9c"/><text x="357.86" y="581.3" font-size="7.4" fill="#a8a8a8">35</text><rect x="405.12" y="584" width="1.8" height="10" fill="#9c9c9c"/><text x="407.92" y="581.3" font-size="7.4" fill="#a8a8a8">40</text><rect x="455.18" y="584" width="1.8" height="10" fill="#9c9c9c"/><text x="457.98" y="581.3" font-size="7.4" fill="#a8a8a8">45</text><rect x="505.24" y="584" width="1.8" height="10" fill="#9c9c9c"/><text x="508.04" y="581.3" font-size="7.4" fill="#a8a8a8">50</text><rect x="555.30" y="584" width="1.8" height="10" fill="#9c9c9c"/><text x="558.10" y="581.3" font-size="7.4" fill="#a8a8a8">55</text><rect x="605.36" y="584" width="1.8" height="10" fill="#9c9c9c"/><text x="608.16" y="581.3" font-size="7.4" fill="#a8a8a8">60</text><rect x="655.42" y="584" width="1.8" height="10" fill="#9c9c9c"/><text x="658.22" y="581.3" font-size="7.4" fill="#a8a8a8">65</text><rect x="705.48" y="584" width="1.8" height="10" fill="#9c9c9c"/><text x="708.28" y="581.3" font-size="7.4" fill="#a8a8a8">70</text><rect x="755.54" y="584" width="1.8" height="10" fill="#9c9c9c"/><text x="758.34" y="581.3" font-size="7.4" fill="#a8a8a8">75</text><rect x="805.60" y="584" width="1.8" height="10" fill="#9c9c9c"/><text x="808.40" y="581.3" font-size="7.4" fill="#a8a8a8">80</text><rect x="855.66" y="584" width="1.8" height="10" fill="#9c9c9c"/><text x="858.46" y="581.3" font-size="7.4" fill="#a8a8a8">85</text><rect x="905.72" y="584" width="1.8" height="10" fill="#9c9c9c"/><text x="908.52" y="581.3" font-size="7.4" fill="#a8a8a8">90</text><rect x="955.78" y="584" width="1.8" height="10" fill="#9c9c9c"/><text x="958.58" y="581.3" font-size="7.4" fill="#a8a8a8">95</text><rect x="1005.84" y="584" width="1.8" height="10" fill="#9c9c9c"/><text x="1008.64" y="581.3" font-size="7.4" fill="#a8a8a8">100</text><rect x="1055.90" y="584" width="1.8" height="10" fill="#9c9c9c"/><text x="1058.70" y="581.3" font-size="7.4" fill="#a8a8a8">105</text><rect x="1105.96" y="584" width="1.8" height="10" fill="#9c9c9c"/><text x="1108.76" y="581.3" font-size="7.4" fill="#a8a8a8">110</text><rect x="1156.02" y="584" width="1.8" height="10" fill="#9c9c9c"/><text x="1158.82" y="581.3" font-size="7.4" fill="#a8a8a8">115</text><rect x="1206.08" y="584" width="1.8" height="10" fill="#9c9c9c"/><text x="1208.88" y="581.3" font-size="7.4" fill="#a8a8a8">120</text></svg>
<div style="left:1228.6px;top:579px;width:65.4px;height:13.4px;background:#2b2b2b;border-radius:2px;"></div>
<div class="t" style="left:1232.4px;top:582.1px;color:#c6c6c6;font-size:7.7px;">1</div>
<svg style="left:0;top:0" width="1445" height="600"><rect x="1301.7" y="580.2" width="1.4" height="9.6" fill="#d0d0d0"/><path d="M1309.2 580.5 L1309.2 589.5 L1304.8 585 Z" fill="#d0d0d0"/><path d="M1314.3 580.5 L1314.3 589.5 L1309.8999999999999 585 Z" fill="#d0d0d0"/><rect x="1320.8" y="580.2" width="1.4" height="9.6" fill="#d0d0d0"/><path d="M1330.3000000000002 580.2 L1330.3000000000002 589.8 L1323.5 585 Z" fill="#d0d0d0"/><rect x="1338.3" y="578" width="0.7" height="14" fill="#8a8a8a"/><rect x="1337.5" y="580.2" width="2.3" height="9.6" rx="0.6" fill="#e07830"/><path d="M1347.4 580.2 L1347.4 589.8 L1340.6 585 Z" fill="#d0d0d0"/><path d="M1364.8000000000002 578.8 L1364.8000000000002 591.2 L1355.0 585 Z" fill="#d0d0d0"/><path d="M1372.8 578.8 L1372.8 591.2 L1382.3999999999999 585 Z" fill="#d0d0d0"/><path d="M1390.1 580.2 L1390.1 589.8 L1397.1 585 Z" fill="#d0d0d0"/><rect x="1398.2" y="578" width="0.7" height="14" fill="#8a8a8a"/><rect x="1397.4" y="580.2" width="2.3" height="9.6" rx="0.6" fill="#e07830"/><path d="M1407.0 580.2 L1407.0 589.8 L1414.1999999999998 585 Z" fill="#d0d0d0"/><rect x="1414.9" y="580.2" width="1.4" height="9.6" fill="#d0d0d0"/><path d="M1423.2 580.5 L1423.2 589.5 L1427.8 585 Z" fill="#d0d0d0"/><path d="M1428.4 580.5 L1428.4 589.5 L1433.0 585 Z" fill="#d0d0d0"/><rect x="1433.8" y="580.2" width="1.4" height="9.6" fill="#d0d0d0"/></svg>
<div style="left:10.8px;top:605.4px;width:66px;height:18.4px;background:#2b2b2b;border-radius:2px;"></div>
<div class="t" style="left:14.8px;top:610.6px;color:#c6c6c6;font-size:7.7px;">1</div>
<div style="left:83px;top:605.4px;width:66px;height:18.4px;background:#2b2b2b;border-radius:2px;"></div>
<div class="t" style="left:87px;top:610.6px;color:#c6c6c6;font-size:7.7px;">1</div>
<div style="left:154px;top:605.4px;width:693px;height:18.4px;background:#373737;"></div>
<div style="left:157.6px;top:607px;width:419.6px;height:14.6px;background:#5d5d5d;border-radius:2px;"></div>
<div style="left:160.8px;top:608.8px;width:11.4px;height:11px;background:#9a9a9a;border-radius:2.6px;"></div>
<div style="left:563.2px;top:608.8px;width:11.4px;height:11px;background:#9a9a9a;border-radius:2.6px;"></div>
<div class="t" style="left:174.6px;top:610.6px;color:#c6c6c6;font-size:7.7px;">1</div>
<div class="t" style="left:546.6px;top:610.6px;color:#c6c6c6;font-size:7.7px;">120</div>
<div style="left:852px;top:605.4px;width:66px;height:18.4px;background:#2b2b2b;border-radius:2px;"></div>
<div class="t" style="left:856px;top:610.6px;color:#c6c6c6;font-size:7.7px;">120</div>
<div style="left:924px;top:605.4px;width:66.2px;height:18.4px;background:#2b2b2b;border-radius:2px;"></div>
<div class="t" style="left:928px;top:610.6px;color:#c6c6c6;font-size:7.7px;">200</div>
<svg style="left:0;top:0" width="1445" height="630"><path d="M994.4 607 V622" stroke="#6c6c6c" stroke-width="1"/><path d="M994.4 610 V619" stroke="#767676" stroke-width="2.2" stroke-linecap="round"/><path d="M1027.6 607 V622" stroke="#6c6c6c" stroke-width="1"/><path d="M1027.6 610 V619" stroke="#767676" stroke-width="2.2" stroke-linecap="round"/><path d="M1233 607 V622" stroke="#6c6c6c" stroke-width="1"/><path d="M1233 610 V619" stroke="#767676" stroke-width="2.2" stroke-linecap="round"/><path d="M1369.8 607 V622" stroke="#6c6c6c" stroke-width="1"/><path d="M1369.8 610 V619" stroke="#767676" stroke-width="2.2" stroke-linecap="round"/><path d="M1008 607.6 H1014 V619.6 L1011 616.8 L1008 619.6 Z" fill="#e07830"/><path d="M1014.4 609.6 H1019.2 M1016.8 607.2 V612" stroke="#f0f0f0" stroke-width="1.1"/><path d="M1039.6 612.4 H1046 L1042.8 616 Z" fill="#5a5a5a" stroke="#9a9a9a" stroke-width="0.7"/><path d="M1136.4 612.4 H1142.8 L1139.6 616 Z" fill="#5a5a5a" stroke="#9a9a9a" stroke-width="0.7"/><path d="M1334 608.9 H1329.6 Q1325.6 608.9 1325.6 612.9 Q1325.6 615.6 1328 616.6 M1328.6 617.3 H1333.4 Q1337.2 617.3 1337.2 613.3 Q1337.2 610.6 1334.8 609.6" fill="none" stroke="#d4d4d4" stroke-width="1.4"/><path d="M1333.4 606.6 L1336.4 608.9 L1333.4 611.2 Z M1329.4 615 L1326.4 617.3 L1329.4 619.6 Z" fill="#d4d4d4"/><rect x="1345.2" y="605.8" width="17" height="17" fill="#5285a6"/><rect x="1347" y="610" width="11.4" height="8.8" fill="#e07830"/><rect x="1348" y="611.6" width="9.4" height="1" fill="#7a4a22"/><rect x="1348" y="616.6" width="9.4" height="1" fill="#7a4a22"/><rect x="1348.6" y="613.2" width="2.2" height="2.8" fill="#f0f0f0"/><rect x="1351.6" y="613.2" width="2.2" height="2.8" fill="#f0f0f0"/><rect x="1354.6" y="613.2" width="2.2" height="2.8" fill="#f0f0f0"/><path d="M1355 607.4 L1360 610.4 L1355 613.4 Z" fill="#e8e8e8" stroke="#5285a6" stroke-width="0.5"/><path d="M1380.4 612 H1383.2 L1387 608.6 V620 L1383.2 616.8 H1380.4 Z" fill="#d4d4d4"/><path d="M1389 611.6 Q1391 614.5 1389 617.4 M1391.2 609.8 Q1394.2 614.5 1391.2 619.2" fill="none" stroke="#d4d4d4" stroke-width="1"/><rect x="1399.8" y="605.8" width="17" height="17.2" fill="#d0303c"/><path d="M1403 611.6 A5.8 5.8 0 0 1 1413.8 611.8 M1413.8 617 A5.8 5.8 0 0 1 1403 617.2" fill="none" stroke="#9fb0b8" stroke-width="1.2"/><path d="M1412.2 609 L1414.8 612.6 L1410.8 612.4 Z M1404.6 620 L1402 616.4 L1406 616.6 Z" fill="#9fb0b8"/><path d="M1402.4 614.4 H1414.2" stroke="#9a9a9a" stroke-width="1.1"/><rect x="1407.2" y="609.8" width="2.3" height="9.4" rx="0.5" fill="#e07830"/><circle cx="1403.6" cy="610.4" r="1" fill="#f0f0f0"/><circle cx="1413.2" cy="618.6" r="1" fill="#f0f0f0"/><circle cx="1425.4" cy="610.6" r="2.5" fill="none" stroke="#c8c8c8" stroke-width="1.3"/><path d="M1425.4 607 V608 M1425.4 613.2 V614.2 M1421.8 610.6 H1422.8 M1428 610.6 H1429" stroke="#c8c8c8" stroke-width="1"/><circle cx="1433.6" cy="611.2" r="1.5" fill="#e07830"/><path d="M1429 614.6 L1432.2 613.6 L1435.4 615.6 L1436.4 614.4 M1432.2 613.8 L1431 617.6 L1433.6 619.2 L1433.2 621.6 M1431 617.6 L1428.6 619.4 L1426.8 619" fill="none" stroke="#e07830" stroke-width="1.6" stroke-linecap="round" stroke-linejoin="round"/></svg>
<div style="left:1052.2px;top:605.8px;width:74.6px;height:17.6px;border:1px solid #535353;border-radius:2px;"></div>
<div class="t" style="left:1056.2px;top:610.6px;color:#c6c6c6;font-size:7.7px;">No Character Set</div>
<div style="left:1149px;top:605.8px;width:75.2px;height:17.6px;border:1px solid #535353;border-radius:2px;"></div>
<div class="t" style="left:1153px;top:610.6px;color:#c6c6c6;font-size:7.7px;">No Anim Layer</div>
<div style="left:1243.2px;top:606.6px;width:71.2px;height:14.4px;background:#5d5d5d;border-radius:1.5px;"></div>
<div style="left:1299.4px;top:606.6px;width:0.8px;height:14.4px;background:#4a4a4a;"></div>
<svg style="left:1302px;top:611px" width="11" height="7"><path d="M1 0.8 H9.4 L5.2 5.4 Z" fill="#dcdcdc"/></svg>
<div class="t" style="left:1246.2px;top:611.1px;color:#d2d2d2;font-size:7.7px;">24 fps</div>
<div class="t" style="left:18px;top:636.8px;color:#dcdcdc;font-size:7.7px;">MEL</div>
<div style="left:44.6px;top:633px;width:558.4px;height:17px;background:#2b2b2b;border-radius:2px;"></div>
<div style="left:609px;top:633px;width:811px;height:17px;background:#2b2b2b;border-radius:2px;"></div>
<svg style="left:604px;top:637px" width="4" height="10"><line x1="2" y1="0" x2="2" y2="9" stroke="#5c5c5c" stroke-width="1" stroke-dasharray="1 1.2"/></svg>
<svg style="left:1424px;top:634px" width="15" height="15"><rect x="0.8" y="0.6" width="13" height="13.4" fill="#cfcfcf"/><rect x="0.8" y="0.6" width="13" height="2.6" fill="#e8e8e8"/><path d="M0.8 3.4 H13.8" stroke="#555" stroke-width="0.7"/><text x="2.4" y="11.6" font-size="7" font-weight="bold" fill="#3a3a3a" font-family="Liberation Mono, monospace" letter-spacing="-1">{;}</text></svg>
<div class="t" style="left:15px;top:660.4px;color:#bcbcbc;font-size:6.7px;">Select Tool</div>
</body></html>
